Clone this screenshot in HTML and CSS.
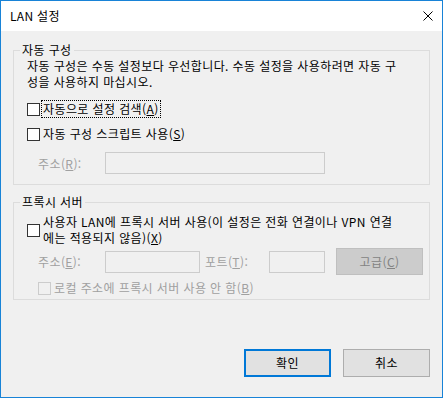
FILE: index.html
```html
<!DOCTYPE html>
<html lang="ko">
<head>
<meta charset="utf-8">
<title>LAN 설정</title>
<link rel="stylesheet" href="styles.css">
</head>
<body>
<div class="window">
  <div class="titlebar">
    <span class="title">LAN 설정</span>
    <svg class="close" width="10" height="10" viewBox="0 0 10 10"><path d="M0.5 0.5 L9.5 9.5 M9.5 0.5 L0.5 9.5" stroke="#000" stroke-width="1" fill="none"/></svg>
  </div>
  <div class="content">
    <fieldset class="group g1">
      <legend>자동 구성</legend>
      <div class="gbody">
        <p class="desc">자동 구성은 수동 설정보다 우선합니다. 수동 설정을 사용하려면 자동 구<br>성을 사용하지 마십시오.</p>
        <div class="check-row r1"><span class="box"></span><span class="label focused">자동으로 설정 검색(<u>A</u>)</span></div>
        <div class="check-row r2"><span class="box"></span><span class="label">자동 구성 스크립트 사용(<u>S</u>)</span></div>
        <div class="field-row r3"><span class="dlabel">주소(<u>R</u>):</span><span class="input in-long"></span></div>
      </div>
    </fieldset>
    <fieldset class="group g2">
      <legend>프록시 서버</legend>
      <div class="gbody">
        <div class="check-row multi"><span class="box"></span><span class="label">사용자 LAN에 프록시 서버 사용(이 설정은 전화 연결이나 VPN 연결<br>에는 적용되지 않음)(<u>X</u>)</span></div>
        <div class="field-row r4"><span class="dlabel">주소(<u>E</u>):</span><span class="input in-addr"></span><span class="dlabel port">포트(<u>T</u>):</span><span class="input in-port"></span><span class="btn disabled">고급(<u>C</u>)</span></div>
        <div class="check-row r5"><span class="box dis"></span><span class="dtext">로컬 주소에 프록시 서버 사용 안 함(<u>B</u>)</span></div>
      </div>
    </fieldset>
    <div class="buttons">
      <span class="btn primary">확인</span>
      <span class="btn">취소</span>
    </div>
  </div>
</div>
</body>
</html>
```
FILE: styles.css
```css
* { box-sizing: border-box; }
html, body { margin: 0; padding: 0; }
body {
  font-family: "Noto Sans CJK KR", "Noto Sans", sans-serif;
  font-size: 12px;
  color: #000;
  background: #f0f0f0;
}
.window {
  width: 443px;
  height: 398px;
  border: 1px solid #1883d7;
  background: #f0f0f0;
  display: flex;
  flex-direction: column;
}
.titlebar {
  height: 30px;
  background: #fff;
  display: flex;
  align-items: center;
  justify-content: space-between;
  padding: 0 9px 0 9px;
  flex: none;
}
.title { font-size: 12px; line-height: 16px; color: #000; letter-spacing: 0.3px; }
.close { display: block; }
.content {
  padding: 0 12px;
  letter-spacing: 0.4px;
}
.group {
  margin: 0;
  border: 1px solid #dcdcdc;
  padding: 0 6px 0 6px;
  min-width: 0;
}
.group legend {
  padding: 0 2px;
  line-height: 14px;
  font-size: 12px;
}
.g1 { margin-top: 12px; padding-bottom: 10px; }
.g2 { margin-top: 10px; padding-bottom: 3px; }
.gbody { padding-left: 7px; }
.desc {
  margin: 1px 0 0 0;
  line-height: 16px;
  white-space: nowrap;
}
.check-row {
  display: flex;
  align-items: center;
  height: 18px;
}
.box {
  width: 13px;
  height: 13px;
  border: 1px solid #333;
  background: #fff;
  flex: none;
  margin-right: 2px;
}
.box.dis { border-color: #ccc; background: #f0f0f0; margin-left: 11px; margin-right: 3px; }
.label { line-height: 16px; padding: 0 1px; white-space: nowrap; }
.label.focused { outline: 1px dotted #000; outline-offset: 0; }
.r1 { margin-top: 10px; }
.r2 { margin-top: 7px; }
.field-row { display: flex; align-items: center; }
.r3 { margin-top: 9px; height: 22px; }
.dlabel { color: #a0a0a0; margin-left: 11px; width: 67px; flex: none; white-space: nowrap; }
.input {
  height: 22px;
  border: 1px solid #cccccc;
  background: #f0f0f0;
  flex: none;
}
.in-long { width: 220px; }
.multi { height: 32px; margin-top: 5px; }
.multi .label { line-height: 16px; }
.r4 { margin-top: 2px; height: 27px; }
.in-addr { width: 95px; }
.dlabel.port { margin-left: 5px; width: 64px; }
.in-port { width: 56px; }
.r5 { margin-top: 5px; height: 16px; }
.dtext { color: #a0a0a0; white-space: nowrap; line-height: 16px; }
.btn {
  display: flex;
  align-items: center;
  justify-content: center;
  width: 87px;
  height: 28px;
  border: 1px solid #adadad;
  background: #e1e1e1;
  flex: none;
  line-height: 16px;
}
.btn.disabled {
  margin-left: 11px;
  height: 27px;
  background: #cccccc;
  border-color: #bfbfbf;
  color: #838383;
}
.btn.primary { border: 2px solid #0078d7; }
.buttons {
  display: flex;
  justify-content: flex-end;
  gap: 12px;
  margin-top: 49px;
}
```
